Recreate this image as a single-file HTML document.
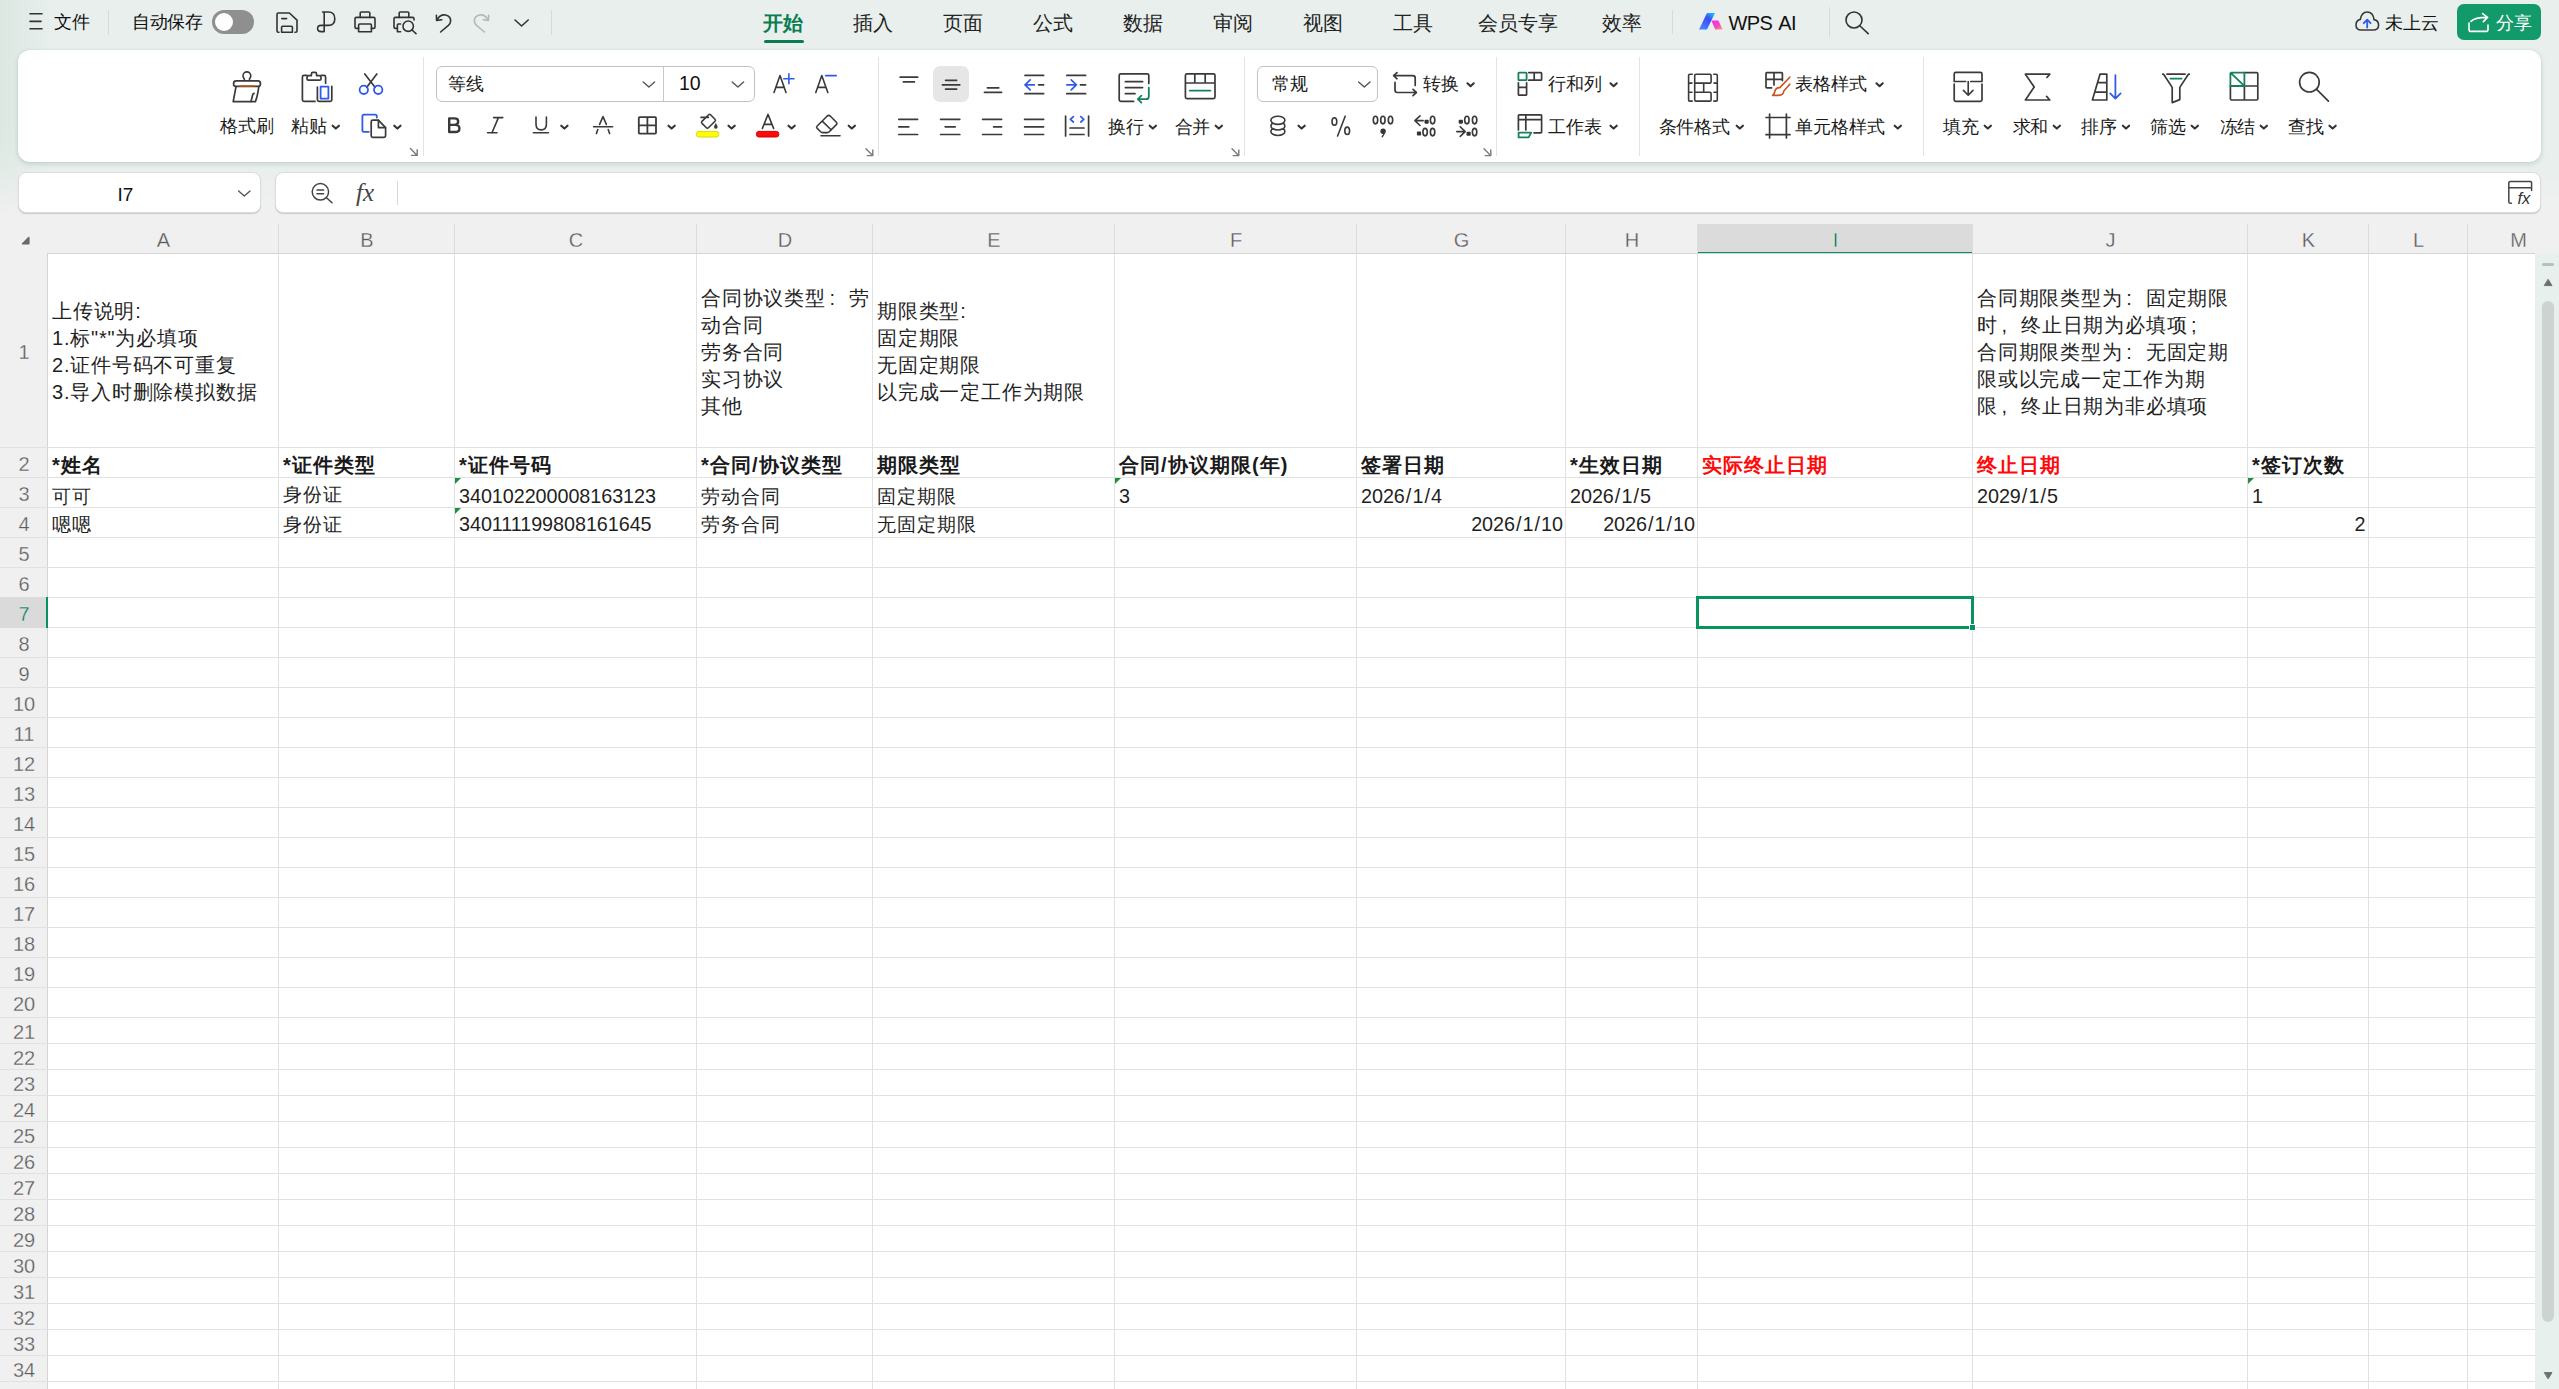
<!DOCTYPE html><html><head><meta charset="utf-8"><title>WPS</title><style>
*{box-sizing:border-box;margin:0;padding:0}
html,body{width:2559px;height:1389px;overflow:hidden}
body{position:relative;font-family:"Liberation Sans",sans-serif;background:#e9f0ed;color:#1a1a1a}
div,.t,.ic{position:absolute}
.t{white-space:nowrap;transform:translateY(-50%);line-height:1;font-size:18px}
.ic{overflow:visible;fill:none;stroke:#333;stroke-width:1.6;stroke-linecap:round;stroke-linejoin:round}
.tab{font-size:20px;color:#222}
.tabon{font-size:20px;color:#0a7c52;font-weight:bold}
.lbl{font-size:18px;color:#1a1a1a}
.vsep{background:#d5dbd8;width:1px}
.rsep{background:#e3e3e3;width:1px}
.panel{background:#fff;border-radius:12px;box-shadow:0 2px 5px rgba(40,80,60,.17),0 0 2px rgba(40,80,60,.10)}
.fbox{background:#fff;border-radius:8px;border:1px solid #dadddc;box-shadow:0 1px 1px rgba(0,0,0,.16)}
.hdr{background:#f0f0f0}
.gl{background:#e1e1e1}
.ct{font-size:19.2px;color:#1f1f1f;letter-spacing:.95px}
.date{letter-spacing:.6px}
.sl{padding:0 1.1px}
.num{font-size:19.8px;letter-spacing:-.06px}
.cb{font-size:20px;color:#1a1a1a;font-weight:bold;letter-spacing:1.05px}
.red{color:#ff0a0a}
.rh{font-size:20px;color:#505050;-webkit-text-stroke:.3px #f0f0f0}
.ml{position:absolute;font-size:20px;line-height:27px;color:#1f1f1f;letter-spacing:.8px;white-space:nowrap}
.fw{display:inline-block;width:1.16em;text-align:left;padding-left:.18em}
.dd{stroke:#222;stroke-width:2.2}

</style></head><body>
<div class="" style="left:0px;top:0px;width:2559px;height:226px;background:linear-gradient(180deg,#e8efec 0,#e8efec 166px,#f0f0f0 206px,#f0f0f0 100%)"></div>
<div class="" style="left:0px;top:0px;width:50px;height:215px;background:linear-gradient(90deg,rgba(216,229,222,.75),rgba(232,239,236,0));-webkit-mask-image:linear-gradient(180deg,#000 0,#000 60%,transparent 100%);mask-image:linear-gradient(180deg,#000 0,#000 60%,transparent 100%)"></div>
<svg class="ic" style="left:30px;top:13.4px;" width="12" height="17" viewBox="0 0 12 17"><path d="M0 .8H12M0 8.4H11M0 15.8H12" stroke-width="1.6"/></svg>
<span class="t " style="left:54px;top:22px;font-size:18px;color:#111">文件</span>
<div class="vsep" style="left:108px;top:10px;width:1px;height:25px;"></div>
<span class="t " style="left:132px;top:22px;font-size:18px;color:#111;letter-spacing:-.4px">自动保存</span>
<div class="" style="left:212px;top:10px;width:42px;height:24px;background:#8f8f8f;border-radius:12px"></div>
<div class="" style="left:215px;top:13px;width:18px;height:18px;background:#fff;border-radius:9px"></div>
<svg class="ic" style="left:276px;top:11.5px;" width="22" height="21" viewBox="0 0 22 21"><path d="M3 20.2H2.2Q1 20.2 1 19V2.2Q1 1 2.2 1H13.4L21 8.2V19Q21 20.2 19.8 20.2H19"/><path d="M5.6 20.2V15.2Q5.6 14.2 6.6 14.2H15.4Q16.4 14.2 16.4 15.2V20.2Z"/><path d="M5.8 6.6H10.6"/></svg>
<svg class="ic" style="left:316px;top:11px;" width="20" height="22" viewBox="0 0 20 22"><path d="M8.2 1V20.6H5.2Q1.6 20.6 1.6 17.6Q1.6 14.4 5.2 14.4H12.4Q18.8 14.4 18.8 7.7Q18.8 1 12.4 1H6.6"/></svg>
<svg class="ic" style="left:354px;top:11px;" width="22" height="22" viewBox="0 0 22 22"><path d="M6.2 6.4V2Q6.2 1 7.2 1H14.8Q15.8 1 15.8 2V6.4"/><path d="M4.6 17.4H2.4Q1 17.4 1 16V7.8Q1 6.4 2.4 6.4H19.6Q21 6.4 21 7.8V16Q21 17.4 19.6 17.4H17.4"/><path d="M4.6 20.8V14Q4.6 13 5.6 13H16.4Q17.4 13 17.4 14V20.8Z"/></svg>
<svg class="ic" style="left:393px;top:11px;" width="24" height="24" viewBox="0 0 24 24"><path d="M6.2 6.4V2Q6.2 1 7.2 1H14.8Q15.8 1 15.8 2V6.4"/><path d="M3.6 17.4H2.4Q1 17.4 1 16V7.8Q1 6.4 2.4 6.4H19.6Q21 6.4 21 7.8V9"/><path d="M7.6 13H5.4Q4.4 13 4.4 14V20.8H7.6"/><circle cx="15.2" cy="15.2" r="5.2"/><path d="M19 19L23 22.6"/></svg>
<svg class="ic" style="left:434.5px;top:13.5px;" width="17" height="19" viewBox="0 0 17 19"><path d="M1.4 1.2L1.6 6.4L6.8 5.8"/><path d="M1.8 6.2Q5 0 10.6 1Q16 2.4 15.6 7.2Q15.4 9.6 13.4 11.4L5.6 18"/></svg>
<svg class="ic" style="left:474px;top:13.5px;stroke:#b3b8b6" width="17" height="19" viewBox="0 0 17 19"><path d="M14.6 1.2L14.4 6.4L9.2 5.8"/><path d="M14.2 6.2Q11 0 5.4 1Q0 2.4 .4 7.2Q.6 9.6 2.6 11.4L10.4 18"/></svg>
<svg class="ic" style="left:513.6px;top:18.8px;" width="15" height="8" viewBox="0 0 15 8"><path d="M1 1L7.6 7L14.2 1"/></svg>
<div class="vsep" style="left:551px;top:10px;width:1px;height:25px;"></div>
<span class="t tabon" style="left:763px;top:23px;">开始</span>
<span class="t tab" style="left:853px;top:23px;">插入</span>
<span class="t tab" style="left:943px;top:23px;">页面</span>
<span class="t tab" style="left:1033px;top:23px;">公式</span>
<span class="t tab" style="left:1123px;top:23px;">数据</span>
<span class="t tab" style="left:1213px;top:23px;">审阅</span>
<span class="t tab" style="left:1303px;top:23px;">视图</span>
<span class="t tab" style="left:1393px;top:23px;">工具</span>
<span class="t tab" style="left:1478px;top:23px;">会员专享</span>
<span class="t tab" style="left:1602px;top:23px;">效率</span>
<div class="" style="left:764px;top:40px;width:40px;height:3px;background:#0a7a50;border-radius:2px"></div>
<div class="vsep" style="left:1672px;top:10px;width:1px;height:24px;"></div>
<svg class="ic" style="left:1699.2px;top:13px;" width="24" height="17" viewBox="0 0 24 17"><defs><linearGradient id="ga" x1="0.8" y1="0" x2="0.2" y2="1"><stop offset="0" stop-color="#1fb6ff"/><stop offset=".35" stop-color="#3a4bf5"/><stop offset="1" stop-color="#4a86ff"/></linearGradient><linearGradient id="gb" x1="0.2" y1="0" x2="0.9" y2="1"><stop offset="0" stop-color="#f02bf0"/><stop offset=".6" stop-color="#f04fb8"/><stop offset="1" stop-color="#ff9a78"/></linearGradient></defs><path d="M8 0H16L8 16.6H0Z" fill="url(#ga)" stroke="none"/><path d="M12.4 7.6H19.4L23.6 16.6H16.2Z" fill="url(#gb)" stroke="none"/></svg>
<span class="t " style="left:1728.5px;top:22.5px;font-size:20px;color:#111;letter-spacing:-.6px;word-spacing:2.2px">WPS AI</span>
<div class="vsep" style="left:1829px;top:7px;width:1px;height:30px;"></div>
<svg class="ic" style="left:1845px;top:11px;" width="24" height="24" viewBox="0 0 24 24"><circle cx="9" cy="9" r="8"/><path d="M15 15L23.2 22.6"/></svg>
<svg class="ic" style="left:2354.8px;top:11.2px;" width="26" height="21" viewBox="0 0 26 21"><path d="M6.4 19H18.2Q23.6 19 23.6 14Q23.6 9.6 19 8.6Q18 1 12.2 1Q6.6 1 5.4 8.4Q1 9.4 1 14Q1 19 6.4 19Z" stroke="#3a3a3a"/><path d="M12.2 16.6V9M8.8 12.2L12.2 8.6L15.6 12.2" stroke="#2f5bea" stroke-width="1.8"/></svg>
<span class="t " style="left:2385px;top:22.5px;font-size:18px;color:#111">未上云</span>
<div class="" style="left:2457px;top:4px;width:84px;height:36px;background:#129a6a;border-radius:7px"></div>
<svg class="ic" style="left:2468px;top:12.5px;" width="21" height="20" viewBox="0 0 21 20"><path d="M1 10V16.4Q1 18.4 3 18.4H18Q20 18.4 20 16.4V12" stroke="#fff"/><path d="M3 8.4Q7 4.2 19.4 4.4M14.6 0.6L19.6 4.4L15.4 8.6" stroke="#fff"/></svg>
<span class="t " style="left:2496px;top:22.5px;font-size:18px;color:#fff">分享</span>
<div class="panel" style="left:18px;top:50px;width:2523px;height:112px;"></div>
<div class="fbox" style="left:18px;top:172px;width:243px;height:41px;"></div>
<div class="fbox" style="left:275px;top:172px;width:2266px;height:41px;"></div>
<span class="t lbl" style="left:220.4px;top:126.4px;letter-spacing:-0.3px">格式刷</span>
<span class="t lbl" style="left:291.2px;top:126.4px;letter-spacing:-0.3px">粘贴</span>
<div class="rsep" style="left:423px;top:57px;width:1px;height:99px;"></div>
<div class="" style="left:436px;top:66px;width:319px;height:36px;border:1px solid #c2c2c2;border-radius:6px;background:#fff"></div>
<div class="" style="left:663px;top:67px;width:1px;height:34px;background:#c8c8c8"></div>
<span class="t lbl" style="left:448px;top:84.2px;">等线</span>
<span class="t " style="left:679px;top:84.4px;font-size:19.5px;color:#111">10</span>
<div class="rsep" style="left:878px;top:57px;width:1px;height:99px;"></div>
<div class="" style="left:933px;top:66px;width:36px;height:36px;background:#e6e6e6;border-radius:7px"></div>
<span class="t lbl" style="left:1108.2px;top:126.8px;letter-spacing:-0.3px">换行</span>
<span class="t lbl" style="left:1174.8px;top:126.8px;letter-spacing:-0.3px">合并</span>
<div class="rsep" style="left:1244px;top:57px;width:1px;height:99px;"></div>
<div class="" style="left:1257px;top:66px;width:121px;height:36px;border:1px solid #c2c2c2;border-radius:6px;background:#fff"></div>
<span class="t lbl" style="left:1272px;top:84.2px;letter-spacing:-.5px">常规</span>
<span class="t lbl" style="left:1423.4px;top:84.2px;letter-spacing:-0.3px">转换</span>
<div class="rsep" style="left:1496px;top:57px;width:1px;height:99px;"></div>
<span class="t lbl" style="left:1548.4px;top:84.2px;letter-spacing:-0.3px">行和列</span>
<span class="t lbl" style="left:1548.4px;top:126.8px;letter-spacing:-0.3px">工作表</span>
<div class="rsep" style="left:1639px;top:57px;width:1px;height:99px;"></div>
<span class="t lbl" style="left:1658.6px;top:126.8px;letter-spacing:-0.3px">条件格式</span>
<span class="t lbl" style="left:1795.4px;top:84.2px;letter-spacing:-0.1px">表格样式</span>
<span class="t lbl" style="left:1795.4px;top:126.8px;letter-spacing:-0.1px">单元格样式</span>
<div class="rsep" style="left:1923px;top:57px;width:1px;height:99px;"></div>
<span class="t lbl" style="left:1943.2px;top:126.8px;letter-spacing:-0.3px">填充</span>
<span class="t lbl" style="left:2012.8px;top:126.8px;letter-spacing:-0.3px">求和</span>
<span class="t lbl" style="left:2081.2px;top:126.8px;letter-spacing:-0.3px">排序</span>
<span class="t lbl" style="left:2150.4px;top:126.8px;letter-spacing:-0.3px">筛选</span>
<span class="t lbl" style="left:2219.8px;top:126.8px;letter-spacing:-0.3px">冻结</span>
<span class="t lbl" style="left:2288.2px;top:126.8px;letter-spacing:-0.3px">查找</span>
<span class="t " style="left:117.4px;top:194.2px;font-size:19px;color:#111">I7</span>
<span class="t" style="left:356px;top:192.4px;font-family:'Liberation Serif',serif;font-style:italic;font-size:25px;color:#444;letter-spacing:0px">fx</span>
<div class="" style="left:397px;top:181px;width:1px;height:24px;background:#d9d9d9"></div>
<span class="t" style="left:2517.5px;top:197.6px;font-family:'Liberation Sans',sans-serif;font-style:italic;font-size:16.5px;color:#333;letter-spacing:0px">fx</span>
<svg class="ic" style="left:0;top:0" width="2559" height="230" viewBox="0 0 2559 230"><path d="M244.3 80.6V78.8Q243 77.6 243 75.8A3.9 3.9 0 0 1 250.8 75.8Q250.8 77.6 249.5 78.8V80.6" stroke="#3a3a3a" stroke-width="1.6" fill="none" /><path d="M236.2 80.8H257.8Q260.4 80.8 260.4 83.4V84.2Q260.4 86.4 258.2 86.4H235.8Q233.6 86.4 233.6 84.2V83.4Q233.6 80.8 236.2 80.8Z" stroke="#3a3a3a" stroke-width="1.7" fill="none" /><path d="M239.6 86H254.2" stroke="#c8541c" stroke-width="1.7" fill="none" /><path d="M236 86.6L233.2 101.6H255.4Q257.6 96 258.8 86.6" stroke="#3a3a3a" stroke-width="1.7" fill="none" /><path d="M254 93.4Q252.6 93.8 252.4 96L251 101.4" stroke="#3a3a3a" stroke-width="1.7" fill="none" /><path d="M307 75.4H304Q302.4 75.4 302.4 77V99.8Q302.4 101.4 304 101.4H315" stroke="#3a3a3a" stroke-width="1.7" fill="none" /><path d="M321 75.4H324Q325.6 75.4 325.6 77V83.2" stroke="#3a3a3a" stroke-width="1.7" fill="none" /><path d="M311.4 75.6V74Q311.4 72.4 313 72.4H315Q316.6 72.4 316.6 74V75.6H319.4Q321 75.6 321 77.2V78.8Q321 80.2 319.6 80.2H308.4Q307 80.2 307 78.8V77.2Q307 75.6 308.6 75.6Z" stroke="#3a3a3a" stroke-width="1.7" fill="none" /><path d="M317.4 87V99.8Q317.4 101.4 319 101.4H330.2Q331.8 101.4 331.8 99.8V86.4" stroke="#3a3a3a" stroke-width="1.7" fill="none" /><path d="M320.6 86.6H328.4V98.6H320.6Z" stroke="#2f5bea" stroke-width="1.8" fill="none" /><path d="M332.65000000000003 125.69999999999999L335.8 128.6L338.95000000000005 125.69999999999999" stroke="#333" stroke-width="2.1" fill="none" /><path d="M364.8 74L375.2 87.4M376.8 74L366.6 87.4" stroke="#3a3a3a" stroke-width="1.7" fill="none" /><circle cx="363.8" cy="89.8" r="4.2" stroke="#2f5bea" stroke-width="1.8" fill="none"/><circle cx="378.2" cy="89.8" r="4.2" stroke="#2f5bea" stroke-width="1.8" fill="none"/><path d="M368.8 131.8H364Q362.4 131.8 362.4 130.2V116.2Q362.4 114.6 364 114.6H375.2Q376.8 114.6 376.8 116.2V117.6" stroke="#2f5bea" stroke-width="1.8" fill="none" /><path d="M378.4 120.2H372.8Q371.2 120.2 371.2 121.8V135.8Q371.2 137.4 372.8 137.4H384Q385.6 137.4 385.6 135.8V127.6Z" stroke="#3a3a3a" stroke-width="1.7" fill="none" /><path d="M378.4 120.4V127.6H385.4" stroke="#3a3a3a" stroke-width="1.7" fill="none" /><path d="M394.25 125.69999999999999L397.4 128.6L400.55 125.69999999999999" stroke="#333" stroke-width="2.1" fill="none" /><path d="M410.4 148.6L417.0 155.2M411.59999999999997 155.4H417.2V149.79999999999998" stroke="#7a7a7a" stroke-width="1.4" fill="none" /><path d="M643.2 82.0L648.9 87.1L654.6 82.0" stroke="#555" stroke-width="1.4" fill="none" /><path d="M732.2 82.0L737.9 87.1L743.6 82.0" stroke="#555" stroke-width="1.4" fill="none" /><path d="M774 92.4L780 75.6L786 92.4M776.4 87.4H783.8" stroke="#3a3a3a" stroke-width="1.6" fill="none" /><path d="M783.8 78.8H794M788.9 73.8V83.8" stroke="#2f5bea" stroke-width="1.6" fill="none" /><path d="M815.8 92.4L821.8 75.6L827.8 92.4M818.2 87.4H825.6" stroke="#3a3a3a" stroke-width="1.6" fill="none" /><path d="M825.6 75.6H836.2" stroke="#2f5bea" stroke-width="1.6" fill="none" /><path d="M449.2 118.4V132H455.4Q459.4 132 459.4 128.4Q459.4 124.9 455.4 124.9H449.2M449.2 118.4H454.6Q458.2 118.4 458.2 121.6Q458.2 124.9 454.6 124.9" stroke="#3a3a3a" stroke-width="2.4" fill="none" /><path d="M493.6 117.6H502.8M487.6 132.8H497M498.4 117.6L492 132.8" stroke="#3a3a3a" stroke-width="1.6" fill="none" /><path d="M536 117V124.2Q536 129.9 541.2 129.9Q546.4 129.9 546.4 124.2V117M533.4 132.8H548.4" stroke="#3a3a3a" stroke-width="1.6" fill="none" /><path d="M561.25 125.69999999999999L564.4000000000001 128.6L567.5500000000001 125.69999999999999" stroke="#333" stroke-width="2.1" fill="none" /><path d="M596.4 133.6L597.8 129.6M599.6 124.4L603 116.6L606.4 124.4M608.2 129.6L609.6 133.6M593.6 126.8H612.6" stroke="#3a3a3a" stroke-width="1.6" fill="none" /><path d="M639.6 117.2H655.2Q656 117.2 656 118V132.8Q656 133.6 655.2 133.6H639.6Q638.8 133.6 638.8 132.8V118Q638.8 117.2 639.6 117.2ZM647.4 117.2V133.6M638.8 125.4H656" stroke="#3a3a3a" stroke-width="1.8" fill="none" /><path d="M668.4499999999999 125.69999999999999L671.6 128.6L674.75 125.69999999999999" stroke="#333" stroke-width="2.1" fill="none" /><path d="M701 117.4H708.4M708.6 114.8L702 121.4Q701 122.4 702 123.4L706.4 127.8Q707.4 128.8 708.4 127.8L715 121.2Q716 120.2 715 119.2L710.6 114.8Q709.6 113.8 708.6 114.8Z" stroke="#3a3a3a" stroke-width="1.6" fill="none" /><path d="M715.8 123.6Q714.2 126 714.2 127Q714.2 128.6 715.8 128.6Q717.4 128.6 717.4 127Q717.4 126 715.8 123.6Z" stroke="#3a3a3a" stroke-width="0.4" fill="#3a3a3a" /><rect x="696.4" y="131.4" width="22.4" height="5.6" rx="2.4" fill="#ffff00" stroke="#d6d61a" stroke-width="1"/><path d="M728.4499999999999 125.69999999999999L731.6 128.6L734.75 125.69999999999999" stroke="#333" stroke-width="2.1" fill="none" /><path d="M762.4 128.4L768 114.4L773.6 128.4M764.2 124.4H771.8" stroke="#3a3a3a" stroke-width="1.6" fill="none" /><rect x="756.4" y="131.4" width="22.4" height="5.6" rx="2.4" fill="#ff0a0a" stroke="#d40000" stroke-width="1"/><path d="M788.4499999999999 125.69999999999999L791.6 128.6L794.75 125.69999999999999" stroke="#333" stroke-width="2.1" fill="none" /><path d="M827 116.2L817.2 126Q816 127.2 817.2 128.4L820.6 131.8Q821.4 132.6 822.6 132.6H827.4Q828.4 132.6 829.2 131.8L836.4 124.6Q837.6 123.4 836.4 122.2L830.4 116.2Q828.7 114.6 827 116.2ZM822.2 121.2L831.4 130M821 135.8H840" stroke="#3a3a3a" stroke-width="1.6" fill="none" /><path d="M848.65 125.69999999999999L851.8000000000001 128.6L854.95 125.69999999999999" stroke="#333" stroke-width="2.1" fill="none" /><path d="M866 148.8L872.6 155.4M867.2 155.60000000000002H872.8V150.0" stroke="#7a7a7a" stroke-width="1.4" fill="none" /><path d="M900.2 77.2H917.6M903.4 81.9H914.4" stroke="#3a3a3a" stroke-width="1.7" fill="none" /><path d="M945.6 80.3H956.6M942.4 84.8H959.8M945.6 89.2H956.6" stroke="#3a3a3a" stroke-width="1.7" fill="none" /><path d="M987.4 87.8H998.8M984.4 92.3H1001.6" stroke="#3a3a3a" stroke-width="1.7" fill="none" /><path d="M1025 75.4H1043.6M1025 93.7H1043.6M1038.6 84.8H1043.6" stroke="#3a3a3a" stroke-width="1.7" fill="none" /><path d="M1034.4 84.8H1025.2M1030.2 79.8L1025 84.8L1030.2 89.8" stroke="#2f5bea" stroke-width="1.7" fill="none" /><path d="M1066.8 75.4H1085.6M1066.8 93.7H1085.6M1080.4 84.8H1085.6" stroke="#3a3a3a" stroke-width="1.7" fill="none" /><path d="M1066.8 84.8H1076.2M1071.2 79.8L1076.4 84.8L1071.2 89.8" stroke="#2f5bea" stroke-width="1.7" fill="none" /><path d="M898.8 119.3H917.6M898.8 126.8H908.8M898.8 134.5H917.6" stroke="#3a3a3a" stroke-width="1.7" fill="none" /><path d="M940.6 119.3H959.8M945.2 126.8H955.2M940.6 134.5H959.8" stroke="#3a3a3a" stroke-width="1.7" fill="none" /><path d="M982.6 119.3H1001.6M993.6 126.8H1001.6M982.6 134.5H1001.6" stroke="#3a3a3a" stroke-width="1.7" fill="none" /><path d="M1024.6 119.3H1043.6M1024.6 126.8H1043.6M1024.6 134.5H1043.6" stroke="#3a3a3a" stroke-width="1.7" fill="none" /><path d="M1065.6 116.2V136M1088.6 116.2V136M1070 128H1084M1070 134.5H1084" stroke="#3a3a3a" stroke-width="1.7" fill="none" /><path d="M1073.4 116.6L1070.4 119.3L1073.4 122M1080.8 116.6L1083.8 119.3L1080.8 122" stroke="#2f5bea" stroke-width="1.8" fill="none" /><path d="M1133.6 101.4H1120.8Q1119.2 101.4 1119.2 99.8V75.4Q1119.2 73.8 1120.8 73.8H1147.2Q1148.8 73.8 1148.8 75.4V83.4" stroke="#3a3a3a" stroke-width="1.7" fill="none" /><path d="M1125.4 81.7H1142.6M1125.4 87.6H1142.6M1125.4 93.7H1135" stroke="#3a3a3a" stroke-width="1.7" fill="none" /><path d="M1148.8 87.6V96.4Q1148.8 99.1 1146.1 99.1H1138.4M1141.4 95.6L1137.8 99.1L1141.4 102.6" stroke="#15805a" stroke-width="1.8" fill="none" /><path d="M1149.6499999999999 125.69999999999999L1152.8 128.6L1155.9499999999998 125.69999999999999" stroke="#333" stroke-width="2.1" fill="none" /><path d="M1187 73.8H1213.4Q1215 73.8 1215 75.4V97Q1215 98.6 1213.4 98.6H1187Q1185.4 98.6 1185.4 97V75.4Q1185.4 73.8 1187 73.8ZM1185.4 83H1215M1194.8 73.8V83M1205.2 73.8V83" stroke="#3a3a3a" stroke-width="1.7" fill="none" /><path d="M1189.8 90.6H1210.4" stroke="#15805a" stroke-width="1.8" fill="none" /><path d="M1215.6499999999999 125.69999999999999L1218.8 128.6L1221.9499999999998 125.69999999999999" stroke="#333" stroke-width="2.1" fill="none" /><path d="M1232 148.8L1238.6 155.4M1233.2 155.60000000000002H1238.8V150.0" stroke="#7a7a7a" stroke-width="1.4" fill="none" /><path d="M1358.6 82.0L1364.3 87.1L1370 82.0" stroke="#555" stroke-width="1.4" fill="none" /><path d="M1397 72.6L1393.6 75.7L1397 78.8M1394 75.7H1412.8Q1415.2 75.7 1415.2 78.1V85.4" stroke="#3a3a3a" stroke-width="1.7" fill="none" /><path d="M1413 89.4L1416.4 92.5L1413 95.6M1416 92.5H1397.4Q1395 92.5 1395 90.1V82.4" stroke="#3a3a3a" stroke-width="1.7" fill="none" /><path d="M1467.45 83.3L1470.6000000000001 86.2L1473.75 83.3" stroke="#333" stroke-width="2.1" fill="none" /><ellipse cx="1277.9" cy="131.4" rx="7" ry="4.1" stroke="#3a3a3a" stroke-width="1.6" fill="#fff"/><ellipse cx="1277.9" cy="125.9" rx="7" ry="4.1" stroke="#3a3a3a" stroke-width="1.6" fill="#fff"/><ellipse cx="1277.9" cy="120.3" rx="7" ry="4.1" stroke="#3a3a3a" stroke-width="1.6" fill="#fff"/><path d="M1298.45 125.69999999999999L1301.6000000000001 128.6L1304.75 125.69999999999999" stroke="#333" stroke-width="2.1" fill="none" /><path d="M1345.2 116.2L1337.6 136" stroke="#3a3a3a" stroke-width="1.6" fill="none" /><ellipse cx="1334.4" cy="121.4" rx="2.4" ry="3.7" stroke="#3a3a3a" stroke-width="1.6" fill="none"/><ellipse cx="1347.2" cy="130.8" rx="2.4" ry="3.7" stroke="#3a3a3a" stroke-width="1.6" fill="none"/><ellipse cx="1375.5" cy="120.1" rx="2.2" ry="3.8" stroke="#3a3a3a" stroke-width="1.65" fill="none"/><ellipse cx="1382.9" cy="120.1" rx="2.2" ry="3.8" stroke="#3a3a3a" stroke-width="1.65" fill="none"/><ellipse cx="1390.5" cy="120.1" rx="2.2" ry="3.8" stroke="#3a3a3a" stroke-width="1.65" fill="none"/><circle cx="1383.1" cy="131.3" r="1.9" fill="#3a3a3a"/><path d="M1384.3 131.4Q1384.6 134.4 1382.3 136.6" stroke="#3a3a3a" stroke-width="1.5" fill="none" /><path d="M1423.2 120.6H1415M1420 115.8L1414.9 120.6L1420 125.5" stroke="#3a3a3a" stroke-width="1.6" fill="none" /><rect x="1425.3" y="120.55" width="2.6" height="2.3" fill="#3a3a3a"/><ellipse cx="1432.6" cy="120.1" rx="2.2" ry="3.8" stroke="#3a3a3a" stroke-width="1.65" fill="none"/><rect x="1417.7" y="132.35" width="2.6" height="2.3" fill="#3a3a3a"/><ellipse cx="1425.1" cy="132.1" rx="2.2" ry="3.8" stroke="#3a3a3a" stroke-width="1.65" fill="none"/><ellipse cx="1432.6" cy="132.1" rx="2.2" ry="3.8" stroke="#3a3a3a" stroke-width="1.65" fill="none"/><rect x="1459.5" y="120.55" width="2.6" height="2.3" fill="#3a3a3a"/><ellipse cx="1466.9" cy="120.1" rx="2.2" ry="3.8" stroke="#3a3a3a" stroke-width="1.65" fill="none"/><ellipse cx="1474.6" cy="120.1" rx="2.2" ry="3.8" stroke="#3a3a3a" stroke-width="1.65" fill="none"/><path d="M1456.8 131.6H1465M1460.2 126.7L1465.2 131.6L1460.2 136.4" stroke="#3a3a3a" stroke-width="1.6" fill="none" /><rect x="1467.3" y="132.65" width="2.6" height="2.3" fill="#3a3a3a"/><ellipse cx="1474.6" cy="132.1" rx="2.2" ry="3.8" stroke="#3a3a3a" stroke-width="1.65" fill="none"/><path d="M1484 148.8L1490.6 155.4M1485.2 155.60000000000002H1490.8V150.0" stroke="#7a7a7a" stroke-width="1.4" fill="none" /><path d="M1519 72.6H1526Q1526.6 72.6 1526.6 73.2V79.6Q1526.6 80.2 1526 80.2H1519Q1518.4 80.2 1518.4 79.6V73.2Q1518.4 72.6 1519 72.6Z" stroke="#15805a" stroke-width="1.8" fill="none" /><path d="M1528.8 72.6H1540.8Q1541.6 72.6 1541.6 73.4V79.4Q1541.6 80.2 1540.8 80.2H1528.8M1534.2 72.6V80.2" stroke="#3a3a3a" stroke-width="1.7" fill="none" /><path d="M1518.4 82.8V94.4Q1518.4 95.2 1519.2 95.2H1525.8Q1526.6 95.2 1526.6 94.4V82.8M1518.4 87.4H1526.6" stroke="#3a3a3a" stroke-width="1.7" fill="none" /><path d="M1610.45 83.3L1613.6000000000001 86.2L1616.75 83.3" stroke="#333" stroke-width="2.1" fill="none" /><path d="M1518.4 130V115.6Q1518.4 114.8 1519.2 114.8H1540.8Q1541.6 114.8 1541.6 115.6V132Q1541.6 132.8 1540.8 132.8H1534M1518.4 119.7H1541.6M1525.8 114.8V130" stroke="#3a3a3a" stroke-width="1.7" fill="none" /><path d="M1518.6 132.6H1531.2L1528.6 137.4H1518.6Z" stroke="#15805a" stroke-width="1.8" fill="none" /><path d="M1610.45 125.69999999999999L1613.6000000000001 128.6L1616.75 125.69999999999999" stroke="#333" stroke-width="2.1" fill="none" /><path d="M1709.9 74.2H1695.9Q1694.7 74.2 1694.7 75.4V99.9Q1694.7 101.1 1695.9 101.1H1709.9Q1711.1 101.1 1711.1 99.9V93.4Q1711.1 92.2 1709.9 92.2H1694.7M1709.9 74.2Q1711.1 74.2 1711.1 75.4V81.9Q1711.1 83.1 1709.9 83.1H1694.7M1703.7 83.1V92.2" stroke="#3a3a3a" stroke-width="1.6" fill="none" /><path d="M1692.2 74.2H1689.8Q1688.6 74.2 1688.6 75.4V99.9Q1688.6 101.1 1689.8 101.1H1692.2M1688.6 83.1H1692M1688.6 92.2H1692" stroke="#3a3a3a" stroke-width="1.6" fill="none" /><path d="M1713.8 74.2H1716.1Q1717.3 74.2 1717.3 75.4V99.9Q1717.3 101.1 1716.1 101.1H1713.8M1717.3 83.1H1714M1717.3 92.2H1714" stroke="#3a3a3a" stroke-width="1.6" fill="none" /><path d="M1736.6499999999999 125.69999999999999L1739.8 128.6L1742.9499999999998 125.69999999999999" stroke="#333" stroke-width="2.1" fill="none" /><path d="M1771.6 87.8H1766.8Q1766 87.8 1766 87V73.4Q1766 72.6 1766.8 72.6H1781.6Q1782.4 72.6 1782.4 73.4V80.6M1766 79.4H1782.4M1774 72.6V85" stroke="#3a3a3a" stroke-width="1.7" fill="none" /><path d="M1789.8 77.2L1779.8 87.6M1789.8 84.2L1783.8 91M1779.8 87.6Q1775.8 87.6 1775 91Q1774.4 94.2 1772.6 95.4H1778.6Q1783.6 95.2 1783.8 91" stroke="#c8541c" stroke-width="1.6" fill="none" /><path d="M1876.45 83.3L1879.6000000000001 86.2L1882.75 83.3" stroke="#333" stroke-width="2.1" fill="none" /><path d="M1769.6 114.2V138M1786.4 114.2V138M1766 117.5H1790M1766 134.7H1790" stroke="#3a3a3a" stroke-width="1.7" fill="none" /><path d="M1894.6499999999999 125.69999999999999L1897.8 128.6L1900.9499999999998 125.69999999999999" stroke="#333" stroke-width="2.1" fill="none" /><path d="M1965.6 81.5H1954.2V74Q1954.2 72.4 1955.8 72.4H1980.4Q1982 72.4 1982 74V81.5H1970.8M1954.2 84V99.8Q1954.2 101.4 1955.8 101.4H1980.4Q1982 101.4 1982 99.8V84" stroke="#3a3a3a" stroke-width="1.7" fill="none" /><path d="M1968.2 81.6V95M1963.4 90.4L1968.2 95.2L1973 90.4" stroke="#3a3a3a" stroke-width="1.6" fill="none" /><path d="M1984.6499999999999 125.69999999999999L1987.8 128.6L1990.9499999999998 125.69999999999999" stroke="#333" stroke-width="2.1" fill="none" /><path d="M2047 77.4L2049.8 74.2H2025.4L2034.2 87L2025.4 100H2049.8L2046.6 96.4" stroke="#3a3a3a" stroke-width="1.7" fill="none" /><path d="M2053.65 125.69999999999999L2056.7999999999997 128.6L2059.95 125.69999999999999" stroke="#333" stroke-width="2.1" fill="none" /><path d="M2100 74.2H2106.8V100H2092.4ZM2097.6 82.7H2106.8M2094.8 92.1H2106.8" stroke="#3a3a3a" stroke-width="1.7" fill="none" /><path d="M2115.4 75.2V98.4M2110.2 93.4L2115.4 98.6L2120.6 93.4" stroke="#2f5bea" stroke-width="1.8" fill="none" /><path d="M2122.8500000000004 125.69999999999999L2126.0 128.6L2129.15 125.69999999999999" stroke="#333" stroke-width="2.1" fill="none" /><path d="M2167 74.2H2185M2162.8 74.2H2163.6L2172.2 87.4V102.6L2179.8 99.6V87.4L2188.4 74.2H2189.2" stroke="#3a3a3a" stroke-width="1.7" fill="none" /><path d="M2170.4 78.6H2181.6" stroke="#15805a" stroke-width="1.8" fill="none" /><path d="M2191.65 125.69999999999999L2194.7999999999997 128.6L2197.95 125.69999999999999" stroke="#333" stroke-width="2.1" fill="none" /><path d="M2244.4 72.6H2256.6Q2257.8 72.6 2257.8 73.8V98.8Q2257.8 100 2256.6 100H2231.6Q2230.4 100 2230.4 98.8V86M2244.4 86V100M2244.4 86H2257.8" stroke="#3a3a3a" stroke-width="1.7" fill="none" /><path d="M2231.2 72.6H2244.4V86H2230.4V73.4ZM2231 73.2L2244 85.6" stroke="#15805a" stroke-width="1.8" fill="none" /><path d="M2260.65 125.69999999999999L2263.7999999999997 128.6L2266.95 125.69999999999999" stroke="#333" stroke-width="2.1" fill="none" /><circle cx="2309.4" cy="82.2" r="9.8" stroke="#3a3a3a" stroke-width="1.7" fill="none"/><path d="M2316.6 89.4L2328.4 101.2" stroke="#3a3a3a" stroke-width="1.7" fill="none" /><path d="M2329.4500000000003 125.69999999999999L2332.6 128.6L2335.75 125.69999999999999" stroke="#333" stroke-width="2.1" fill="none" /><path d="M238.6 191.0L244.3 196.1L250 191.0" stroke="#555" stroke-width="1.4" fill="none" /><circle cx="320.4" cy="191.8" r="8.2" stroke="#444" stroke-width="1.5" fill="none"/><path d="M317 190H323.6M317 193.8H323.6M326.8 198L332 202.8" stroke="#444" stroke-width="1.5" fill="none" /><path d="M2511.4 203.2H2510.2Q2508.8 203.2 2508.8 201.8V183Q2508.8 181.6 2510.2 181.6H2530.2Q2531.6 181.6 2531.6 183V190.6M2508.8 187.8H2531.6" stroke="#444" stroke-width="1.5" fill="none" /></svg>
<div class="hdr" style="left:0px;top:224px;width:2559px;height:1165px;"></div>
<div class="" style="left:48px;top:254px;width:2487px;height:1135px;background:#fff"></div>
<div class="" style="left:1697px;top:224px;width:275px;height:28px;background:#dbdbdb"></div>
<div class="" style="left:1697px;top:252px;width:276px;height:2px;background:#07935d"></div>
<div class="" style="left:278px;top:224px;width:1px;height:29px;background:#dcdcdc"></div>
<div class="" style="left:454px;top:224px;width:1px;height:29px;background:#dcdcdc"></div>
<div class="" style="left:696px;top:224px;width:1px;height:29px;background:#dcdcdc"></div>
<div class="" style="left:872px;top:224px;width:1px;height:29px;background:#dcdcdc"></div>
<div class="" style="left:1114px;top:224px;width:1px;height:29px;background:#dcdcdc"></div>
<div class="" style="left:1356px;top:224px;width:1px;height:29px;background:#dcdcdc"></div>
<div class="" style="left:1565px;top:224px;width:1px;height:29px;background:#dcdcdc"></div>
<div class="" style="left:1697px;top:224px;width:1px;height:29px;background:#dcdcdc"></div>
<div class="" style="left:1972px;top:224px;width:1px;height:29px;background:#dcdcdc"></div>
<div class="" style="left:2247px;top:224px;width:1px;height:29px;background:#dcdcdc"></div>
<div class="" style="left:2368px;top:224px;width:1px;height:29px;background:#dcdcdc"></div>
<div class="" style="left:2467px;top:224px;width:1px;height:29px;background:#dcdcdc"></div>
<div class="" style="left:2568px;top:224px;width:1px;height:29px;background:#dcdcdc"></div>
<div class="" style="left:47px;top:253px;width:2488px;height:1px;background:#d4d4d4"></div>
<div class="" style="left:47px;top:253px;width:1px;height:1136px;background:#d4d4d4"></div>
<div class="gl" style="left:278px;top:254px;width:1px;height:1135px;"></div>
<div class="gl" style="left:454px;top:254px;width:1px;height:1135px;"></div>
<div class="gl" style="left:696px;top:254px;width:1px;height:1135px;"></div>
<div class="gl" style="left:872px;top:254px;width:1px;height:1135px;"></div>
<div class="gl" style="left:1114px;top:254px;width:1px;height:1135px;"></div>
<div class="gl" style="left:1356px;top:254px;width:1px;height:1135px;"></div>
<div class="gl" style="left:1565px;top:254px;width:1px;height:1135px;"></div>
<div class="gl" style="left:1697px;top:254px;width:1px;height:1135px;"></div>
<div class="gl" style="left:1972px;top:254px;width:1px;height:1135px;"></div>
<div class="gl" style="left:2247px;top:254px;width:1px;height:1135px;"></div>
<div class="gl" style="left:2368px;top:254px;width:1px;height:1135px;"></div>
<div class="gl" style="left:2467px;top:254px;width:1px;height:1135px;"></div>
<div class="gl" style="left:2568px;top:254px;width:1px;height:1135px;"></div>
<div class="gl" style="left:0px;top:447px;width:2535px;height:1px;"></div>
<div class="gl" style="left:0px;top:477px;width:2535px;height:1px;"></div>
<div class="gl" style="left:0px;top:507px;width:2535px;height:1px;"></div>
<div class="gl" style="left:0px;top:537px;width:2535px;height:1px;"></div>
<div class="gl" style="left:0px;top:567px;width:2535px;height:1px;"></div>
<div class="gl" style="left:0px;top:597px;width:2535px;height:1px;"></div>
<div class="gl" style="left:0px;top:627px;width:2535px;height:1px;"></div>
<div class="gl" style="left:0px;top:657px;width:2535px;height:1px;"></div>
<div class="gl" style="left:0px;top:687px;width:2535px;height:1px;"></div>
<div class="gl" style="left:0px;top:717px;width:2535px;height:1px;"></div>
<div class="gl" style="left:0px;top:747px;width:2535px;height:1px;"></div>
<div class="gl" style="left:0px;top:777px;width:2535px;height:1px;"></div>
<div class="gl" style="left:0px;top:807px;width:2535px;height:1px;"></div>
<div class="gl" style="left:0px;top:837px;width:2535px;height:1px;"></div>
<div class="gl" style="left:0px;top:867px;width:2535px;height:1px;"></div>
<div class="gl" style="left:0px;top:897px;width:2535px;height:1px;"></div>
<div class="gl" style="left:0px;top:927px;width:2535px;height:1px;"></div>
<div class="gl" style="left:0px;top:957px;width:2535px;height:1px;"></div>
<div class="gl" style="left:0px;top:987px;width:2535px;height:1px;"></div>
<div class="gl" style="left:0px;top:1017px;width:2535px;height:1px;"></div>
<div class="gl" style="left:0px;top:1043px;width:2535px;height:1px;"></div>
<div class="gl" style="left:0px;top:1069px;width:2535px;height:1px;"></div>
<div class="gl" style="left:0px;top:1095px;width:2535px;height:1px;"></div>
<div class="gl" style="left:0px;top:1121px;width:2535px;height:1px;"></div>
<div class="gl" style="left:0px;top:1147px;width:2535px;height:1px;"></div>
<div class="gl" style="left:0px;top:1173px;width:2535px;height:1px;"></div>
<div class="gl" style="left:0px;top:1199px;width:2535px;height:1px;"></div>
<div class="gl" style="left:0px;top:1225px;width:2535px;height:1px;"></div>
<div class="gl" style="left:0px;top:1251px;width:2535px;height:1px;"></div>
<div class="gl" style="left:0px;top:1277px;width:2535px;height:1px;"></div>
<div class="gl" style="left:0px;top:1303px;width:2535px;height:1px;"></div>
<div class="gl" style="left:0px;top:1329px;width:2535px;height:1px;"></div>
<div class="gl" style="left:0px;top:1355px;width:2535px;height:1px;"></div>
<div class="gl" style="left:0px;top:1381px;width:2535px;height:1px;"></div>
<div class="" style="left:0px;top:597px;width:46px;height:31px;background:#dadada"></div>
<div class="" style="left:46px;top:597px;width:2px;height:31px;background:#07935d"></div>
<span class="t rh" style="left:163.5px;top:240px;transform:translate(-50%,-50%);color:#5a5a5a">A</span>
<span class="t rh" style="left:367.0px;top:240px;transform:translate(-50%,-50%);color:#5a5a5a">B</span>
<span class="t rh" style="left:576.0px;top:240px;transform:translate(-50%,-50%);color:#5a5a5a">C</span>
<span class="t rh" style="left:785.0px;top:240px;transform:translate(-50%,-50%);color:#5a5a5a">D</span>
<span class="t rh" style="left:994.0px;top:240px;transform:translate(-50%,-50%);color:#5a5a5a">E</span>
<span class="t rh" style="left:1236.0px;top:240px;transform:translate(-50%,-50%);color:#5a5a5a">F</span>
<span class="t rh" style="left:1461.5px;top:240px;transform:translate(-50%,-50%);color:#5a5a5a">G</span>
<span class="t rh" style="left:1632.0px;top:240px;transform:translate(-50%,-50%);color:#5a5a5a">H</span>
<span class="t rh" style="left:1835.5px;top:240px;transform:translate(-50%,-50%);color:#0b7d52">I</span>
<span class="t rh" style="left:2110.5px;top:240px;transform:translate(-50%,-50%);color:#5a5a5a">J</span>
<span class="t rh" style="left:2308.5px;top:240px;transform:translate(-50%,-50%);color:#5a5a5a">K</span>
<span class="t rh" style="left:2418.5px;top:240px;transform:translate(-50%,-50%);color:#5a5a5a">L</span>
<span class="t rh" style="left:2518.5px;top:240px;transform:translate(-50%,-50%);color:#5a5a5a">M</span>
<span class="t rh" style="left:24px;top:351.8px;transform:translate(-50%,-50%);color:#5a5a5a">1</span>
<span class="t rh" style="left:24px;top:463.8px;transform:translate(-50%,-50%);color:#5a5a5a">2</span>
<span class="t rh" style="left:24px;top:493.8px;transform:translate(-50%,-50%);color:#5a5a5a">3</span>
<span class="t rh" style="left:24px;top:523.8px;transform:translate(-50%,-50%);color:#5a5a5a">4</span>
<span class="t rh" style="left:24px;top:553.8px;transform:translate(-50%,-50%);color:#5a5a5a">5</span>
<span class="t rh" style="left:24px;top:583.8px;transform:translate(-50%,-50%);color:#5a5a5a">6</span>
<span class="t rh" style="left:24px;top:613.8px;transform:translate(-50%,-50%);color:#0b7d52">7</span>
<span class="t rh" style="left:24px;top:643.8px;transform:translate(-50%,-50%);color:#5a5a5a">8</span>
<span class="t rh" style="left:24px;top:673.8px;transform:translate(-50%,-50%);color:#5a5a5a">9</span>
<span class="t rh" style="left:24px;top:703.8px;transform:translate(-50%,-50%);color:#5a5a5a">10</span>
<span class="t rh" style="left:24px;top:733.8px;transform:translate(-50%,-50%);color:#5a5a5a">11</span>
<span class="t rh" style="left:24px;top:763.8px;transform:translate(-50%,-50%);color:#5a5a5a">12</span>
<span class="t rh" style="left:24px;top:793.8px;transform:translate(-50%,-50%);color:#5a5a5a">13</span>
<span class="t rh" style="left:24px;top:823.8px;transform:translate(-50%,-50%);color:#5a5a5a">14</span>
<span class="t rh" style="left:24px;top:853.8px;transform:translate(-50%,-50%);color:#5a5a5a">15</span>
<span class="t rh" style="left:24px;top:883.8px;transform:translate(-50%,-50%);color:#5a5a5a">16</span>
<span class="t rh" style="left:24px;top:913.8px;transform:translate(-50%,-50%);color:#5a5a5a">17</span>
<span class="t rh" style="left:24px;top:943.8px;transform:translate(-50%,-50%);color:#5a5a5a">18</span>
<span class="t rh" style="left:24px;top:973.8px;transform:translate(-50%,-50%);color:#5a5a5a">19</span>
<span class="t rh" style="left:24px;top:1003.8px;transform:translate(-50%,-50%);color:#5a5a5a">20</span>
<span class="t rh" style="left:24px;top:1031.8px;transform:translate(-50%,-50%);color:#5a5a5a">21</span>
<span class="t rh" style="left:24px;top:1057.8px;transform:translate(-50%,-50%);color:#5a5a5a">22</span>
<span class="t rh" style="left:24px;top:1083.8px;transform:translate(-50%,-50%);color:#5a5a5a">23</span>
<span class="t rh" style="left:24px;top:1109.8px;transform:translate(-50%,-50%);color:#5a5a5a">24</span>
<span class="t rh" style="left:24px;top:1135.8px;transform:translate(-50%,-50%);color:#5a5a5a">25</span>
<span class="t rh" style="left:24px;top:1161.8px;transform:translate(-50%,-50%);color:#5a5a5a">26</span>
<span class="t rh" style="left:24px;top:1187.8px;transform:translate(-50%,-50%);color:#5a5a5a">27</span>
<span class="t rh" style="left:24px;top:1213.8px;transform:translate(-50%,-50%);color:#5a5a5a">28</span>
<span class="t rh" style="left:24px;top:1239.8px;transform:translate(-50%,-50%);color:#5a5a5a">29</span>
<span class="t rh" style="left:24px;top:1265.8px;transform:translate(-50%,-50%);color:#5a5a5a">30</span>
<span class="t rh" style="left:24px;top:1291.8px;transform:translate(-50%,-50%);color:#5a5a5a">31</span>
<span class="t rh" style="left:24px;top:1317.8px;transform:translate(-50%,-50%);color:#5a5a5a">32</span>
<span class="t rh" style="left:24px;top:1343.8px;transform:translate(-50%,-50%);color:#5a5a5a">33</span>
<span class="t rh" style="left:24px;top:1369.8px;transform:translate(-50%,-50%);color:#5a5a5a">34</span>
<svg class="ic" style="left:20.6px;top:235.6px" width="9" height="9" viewBox="0 0 9 9"><path d="M7.8 1.6 L7.8 7.8 L1.6 7.8 Z" fill="#6a6a6a" stroke="#6a6a6a" stroke-width="1.6"/></svg>
<div class="ml" style="left:52px;top:298px">上传说明:<br>1.标"*"为必填项<br>2.证件号码不可重复<br>3.导入时删除模拟数据</div>
<div class="ml" style="left:701px;top:285px">合同协议类型<span class="fw">:</span>劳<br>动合同<br>劳务合同<br>实习协议<br>其他</div>
<div class="ml" style="left:877px;top:298px">期限类型:<br>固定期限<br>无固定期限<br>以完成一定工作为期限</div>
<div class="ml" style="left:1977px;top:285px">合同期限类型为<span class="fw">:</span>固定期限<br>时<span class="fw">,</span>终止日期为必填项<span class="fw">;</span><br>合同期限类型为<span class="fw">:</span>无固定期<br>限或以完成一定工作为期<br>限<span class="fw">,</span>终止日期为非必填项</div>
<span class="t cb " style="left:52px;top:464.7px;">*姓名</span>
<span class="t cb " style="left:283px;top:464.7px;">*证件类型</span>
<span class="t cb " style="left:459px;top:464.7px;">*证件号码</span>
<span class="t cb " style="left:701px;top:464.7px;">*合同/协议类型</span>
<span class="t cb " style="left:877px;top:464.7px;">期限类型</span>
<span class="t cb " style="left:1119px;top:464.7px;">合同/协议期限(年)</span>
<span class="t cb " style="left:1361px;top:464.7px;">签署日期</span>
<span class="t cb " style="left:1570px;top:464.7px;">*生效日期</span>
<span class="t cb red" style="left:1702px;top:464.7px;">实际终止日期</span>
<span class="t cb red" style="left:1977px;top:464.7px;">终止日期</span>
<span class="t cb " style="left:2252px;top:464.7px;">*签订次数</span>
<span class="t ct" style="left:52px;top:496.7px;">可可</span>
<span class="t ct num" style="left:459px;top:496.7px;">340102200008163123</span>
<span class="t ct" style="left:701px;top:496.7px;">劳动合同</span>
<span class="t ct" style="left:877px;top:496.7px;">固定期限</span>
<span class="t ct num" style="left:1119px;top:496.7px;">3</span>
<span class="t ct num date" style="left:1361px;top:496.7px;">2026<span class="sl">/</span>1<span class="sl">/</span>4</span>
<span class="t ct num date" style="left:1570px;top:496.7px;">2026<span class="sl">/</span>1<span class="sl">/</span>5</span>
<span class="t ct num date" style="left:1977px;top:496.7px;">2029<span class="sl">/</span>1<span class="sl">/</span>5</span>
<span class="t ct num" style="left:2252px;top:496.7px;">1</span>
<span class="t ct" style="left:283px;top:494.7px;">身份证</span>
<span class="t ct" style="left:52px;top:524.8px;">嗯嗯</span>
<span class="t ct" style="left:283px;top:524.8px;">身份证</span>
<span class="t ct num" style="left:459px;top:524.8px;">340111199808161645</span>
<span class="t ct" style="left:701px;top:524.8px;">劳务合同</span>
<span class="t ct" style="left:877px;top:524.8px;">无固定期限</span>
<span class="t ct num date" style="left:1563px;top:524.8px;transform:translate(-100%,-50%)">2026<span class="sl">/</span>1<span class="sl">/</span>10</span>
<span class="t ct num date" style="left:1695px;top:524.8px;transform:translate(-100%,-50%)">2026<span class="sl">/</span>1<span class="sl">/</span>10</span>
<span class="t ct num " style="left:2365.5px;top:524.8px;transform:translate(-100%,-50%)">2</span>
<svg class="ic" style="left:455px;top:478px" width="6" height="6" viewBox="0 0 6 6"><path d="M0 0H6L0 6Z" fill="#1e8f3e" stroke="none"/></svg>
<svg class="ic" style="left:455px;top:508px" width="6" height="6" viewBox="0 0 6 6"><path d="M0 0H6L0 6Z" fill="#1e8f3e" stroke="none"/></svg>
<svg class="ic" style="left:1115px;top:478px" width="6" height="6" viewBox="0 0 6 6"><path d="M0 0H6L0 6Z" fill="#1e8f3e" stroke="none"/></svg>
<svg class="ic" style="left:2248px;top:478px" width="6" height="6" viewBox="0 0 6 6"><path d="M0 0H6L0 6Z" fill="#1e8f3e" stroke="none"/></svg>
<div class="" style="left:1696px;top:596px;width:278px;height:33px;border:3px solid #07935d;background:transparent"></div>
<div class="" style="left:1969px;top:624px;width:7px;height:7px;background:#07935d;border:1px solid #fff"></div>
<div class="" style="left:2535px;top:254px;width:24px;height:1135px;background:#e7f0ec"></div>
<div class="" style="left:2542px;top:301px;width:12px;height:1021px;background:#cdd3d1;border-radius:6px"></div>
<div class="" style="left:2542px;top:263px;width:12px;height:3px;background:#b9bfbd;border-radius:1.5px"></div>
<svg class="ic" style="left:2543.8px;top:279.4px" width="8.6" height="7.2" viewBox="0 0 8.6 7.2"><path d="M4.3 .6L8 6.6H.6Z" fill="#6e6e6e" stroke="#6e6e6e" stroke-width="1" /></svg>
<svg class="ic" style="left:2543.8px;top:1372.4px" width="8.6" height="7.2" viewBox="0 0 8.6 7.2"><path d="M4.3 6.6L8 .6H.6Z" fill="#6e6e6e" stroke="#6e6e6e" stroke-width="1"/></svg>
</body></html>
